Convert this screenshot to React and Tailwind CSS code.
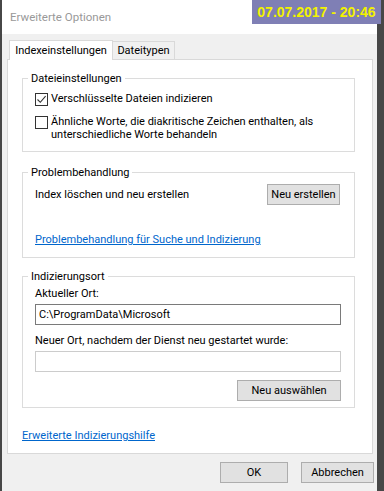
import { useState } from 'react';

function Btn({ children, className = '' }) {
  return (
    <button
      className={[
        'flex h-[21px] items-center justify-center whitespace-nowrap border border-[#adadad] bg-[#e1e1e1] text-[11px] text-black',
        className,
      ].join(' ')}
    >
      {children}
    </button>
  );
}

function Group({ title, className = '', children }) {
  return (
    <div className={['relative w-[333px] border border-[#dcdcdc]', className].join(' ')}>
      <span className="absolute -top-[8px] left-[5px] bg-white px-[3px] leading-[16px] text-black">{title}</span>
      {children}
    </div>
  );
}

function Check({ checked }) {
  return (
    <span className="flex h-[13px] w-[13px] shrink-0 items-center justify-center border border-[#333] bg-white">
      {checked && (
        <svg width="11" height="11" viewBox="0 0 11 11">
          <path d="M1.5 5.5 L4.3 8.3 L9.6 2.2" fill="none" stroke="#333" strokeWidth="1.1" />
        </svg>
      )}
    </span>
  );
}

export default function App() {
  const [encrypted, setEncrypted] = useState(true);
  const [similar, setSimilar] = useState(false);

  return (
    <div
      className="relative flex h-[491px] w-[384px] overflow-hidden bg-[#474747] text-[11px] leading-[16px] text-black"
      style={{ fontFamily: 'Roboto, "Noto Sans", sans-serif' }}
    >
      <div className="ml-[2px] flex h-full w-[375px] flex-col bg-[#f0f0f0]">
        <div className="flex h-[34px] items-center bg-white pl-[8px] text-[11.5px] text-[#999]">Erweiterte Optionen</div>

        <div className="mt-[6px] flex items-end pl-[7px]">
          <div className="relative z-10 -mb-px flex h-[20px] w-[104px] items-center justify-center border border-b-0 border-[#d9d9d9] bg-white">
            Indexeinstellungen
          </div>
          <div className="flex h-[18px] w-[62px] items-center justify-center border border-l-0 border-b-0 border-[#d9d9d9] bg-[#f0f0f0]">
            Dateitypen
          </div>
        </div>

        <div className="ml-[5px] flex h-[395px] w-[366px] flex-col border border-[#d9d9d9] bg-white pl-[14px] pt-[18px]">
          <Group title="Dateieinstellungen" className="h-[74px]">
            <label className="mt-[12px] ml-[12px] flex items-center gap-[3px]" onClick={() => setEncrypted((v) => !v)}>
              <Check checked={encrypted} />
              <span>Verschlüsselte Dateien indizieren</span>
            </label>
            <label className="mt-[8px] ml-[12px] flex items-start gap-[3px]" onClick={() => setSimilar((v) => !v)}>
              <span className="pt-[1px]">
                <Check checked={similar} />
              </span>
              <span className="leading-[13px]">
                Ähnliche Worte, die diakritische Zeichen enthalten, als
                <br />
                unterschiedliche Worte behandeln
              </span>
            </label>
          </Group>

          <Group title="Problembehandlung" className="mt-[20px] h-[86px]">
            <div className="mt-[11px] flex items-center justify-between pl-[12px] pr-[14px]">
              <span>Index löschen und neu erstellen</span>
              <Btn className="w-[73px]">Neu erstellen</Btn>
            </div>
            <a href="#" className="mt-[27px] ml-[12px] block w-fit text-[#0066cc] underline">
              Problembehandlung für Suche und Indizierung
            </a>
          </Group>

          <Group title="Indizierungsort" className="mt-[18px] h-[132px]">
            <div className="mt-[9px] ml-[12px]">Aktueller Ort:</div>
            <div className="mt-[2px] ml-[12px] flex h-[21px] w-[306px] items-center border border-[#7a7a7a] bg-white pl-[3px]">
              C:\ProgramData\Microsoft
            </div>
            <div className="mt-[8px] ml-[12px]">Neuer Ort, nachdem der Dienst neu gestartet wurde:</div>
            <div className="mt-[2px] ml-[12px] h-[21px] w-[306px] border border-[#cccccc] bg-white" />
            <div className="mt-[8px] flex justify-end pr-[13px]">
              <Btn className="w-[104px]">Neu auswählen</Btn>
            </div>
          </Group>

          <a href="#" className="mt-[20px] block w-fit text-[#0066cc] underline">
            Erweiterte Indizierungshilfe
          </a>
        </div>

        <div className="mt-[8px] flex justify-end gap-[13px] pr-[3px]">
          <Btn className="w-[68px]">OK</Btn>
          <Btn className="w-[73px]">Abbrechen</Btn>
        </div>
      </div>

      <div
        className="absolute left-[252px] top-0 flex h-[24px] w-[129px] items-center justify-center bg-[#7f7fb5] text-[14px] font-bold text-[#f2f200]"
        style={{ fontFamily: '"Liberation Sans", Arial, sans-serif' }}
      >
        07.07.2017 - 20:46
      </div>
    </div>
  );
}
